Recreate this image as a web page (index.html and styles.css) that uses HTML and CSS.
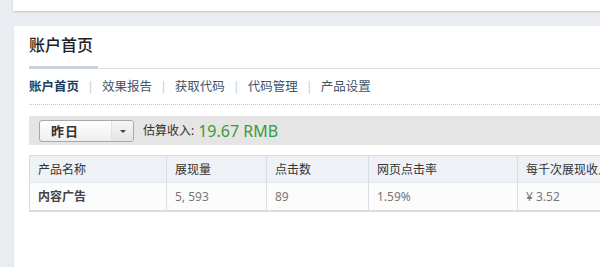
FILE: index.html
```html
<!DOCTYPE html>
<html lang="zh-CN">
<head>
    <meta charset="UTF-8">
    <title>账户首页</title>
    <link rel="stylesheet" href="styles.css">
</head>
<body>
    <div class="topbar"></div>

    <div class="panel">
        <div class="page-head">
            <h1>账户首页</h1>
        </div>

        <ul class="subnav">
            <li class="active"><a href="#">账户首页</a></li>
            <li><a href="#">效果报告</a></li>
            <li><a href="#">获取代码</a></li>
            <li><a href="#">代码管理</a></li>
            <li><a href="#">产品设置</a></li>
        </ul>

        <div class="filter-bar">
            <div class="select">
                <span class="select-text">昨日</span>
                <span class="select-arrow"></span>
            </div>
            <span class="income-label">估算收入:</span>
            <span class="income-value">19.67 RMB</span>
        </div>

        <table class="report">
            <thead>
                <tr>
                    <th class="col-name">产品名称</th>
                    <th class="col-views">展现量</th>
                    <th class="col-clicks">点击数</th>
                    <th class="col-ctr">网页点击率</th>
                    <th class="col-rpm">每千次展现收入</th>
                </tr>
            </thead>
            <tbody>
                <tr>
                    <td class="name">内容广告</td>
                    <td>5, 593</td>
                    <td>89</td>
                    <td>1.59%</td>
                    <td>¥ 3.52</td>
                </tr>
            </tbody>
        </table>
    </div>
</body>
</html>
```

FILE: styles.css
```css
:root {
    --page-bg: #e9edf1;
    --text-dark: #333333;
    --text-gray: #777777;
    --nav-blue: #1d3d5e;
    --nav-text: #3e5568;
    --line: #dcdfe3;
    --bar-bg: #e5e5e5;
    --table-border: #d7dde5;
    --table-head: #eef1f6;
    --green: #3a9a3a;
}

* {
    margin: 0;
    padding: 0;
    box-sizing: border-box;
}

body {
    background-color: var(--page-bg);
    font-family: 'Noto Sans', 'Noto Sans CJK SC', sans-serif;
    font-size: 12px;
    color: var(--text-dark);
    overflow: hidden;
    height: 267px;
}

.topbar {
    margin-left: 13px;
    height: 11px;
    background-color: #fff;
    box-shadow: 0 1px 2px rgba(0, 0, 0, 0.18);
}

.panel {
    margin-top: 15px;
    margin-left: 13px;
    width: 587px;
    height: 241px;
    background-color: #fff;
    border-left: 1px solid #e3e6ea;
    padding-left: 15px;
    overflow: hidden;
}

.page-head {
    border-bottom: 1px solid var(--line);
    height: 43px;
    padding-top: 9px;
}

.page-head h1 {
    display: inline-block;
    font-size: 16px;
    font-weight: 500;
    line-height: 20px;
    color: #222;
    padding-right: 5px;
    height: 34px;
    border-bottom: 3px solid #cbd2db;
}

.subnav {
    list-style: none;
    display: flex;
    margin-top: 10px;
    padding-bottom: 9px;
    border-bottom: 1px dotted #c4c4c4;
}

.subnav li {
    font-size: 12.5px;
    line-height: 16px;
}

.subnav li + li::before {
    content: '|';
    color: #c9ced3;
    margin: 0 8px 0 8px;
}

.subnav a {
    color: var(--nav-text);
    text-decoration: none;
}

.subnav .active a {
    color: var(--nav-blue);
    font-weight: bold;
}

.filter-bar {
    margin-top: 11px;
    height: 29px;
    background-color: var(--bar-bg);
    display: flex;
    align-items: center;
    padding-left: 10px;
}

.select {
    width: 95px;
    height: 22px;
    border: 1px solid #a8a8a8;
    border-radius: 3px;
    background: linear-gradient(#ffffff, #eeeeee);
    display: flex;
    align-items: center;
}

.select-text {
    flex: 1;
    padding-left: 11px;
    font-size: 13px;
    font-weight: bold;
    letter-spacing: 1px;
    color: #333;
    line-height: 20px;
}

.select-arrow {
    width: 22px;
    height: 20px;
    border-left: 1px solid #e2e2e2;
    background: linear-gradient(#f6f6f6, #e4e4e4);
    border-radius: 0 2px 2px 0;
    position: relative;
}

.select-arrow::after {
    content: '';
    position: absolute;
    left: 8px;
    top: 9px;
    border-left: 3px solid transparent;
    border-right: 3px solid transparent;
    border-top: 3px solid #444;
}

.income-label {
    margin-left: 9px;
    color: #333;
    line-height: 16px;
}

.income-value {
    margin-left: 4px;
    font-size: 16px;
    line-height: 20px;
    color: var(--green);
}

.report {
    margin-top: 10px;
    border-collapse: collapse;
    width: 680px;
    table-layout: fixed;
    border: 1px solid var(--table-border);
    border-bottom-width: 2px;
}

.report th,
.report td {
    text-align: left;
    font-weight: normal;
    padding: 0 8px;
    border-left: 1px solid var(--table-border);
    white-space: nowrap;
    overflow: hidden;
}

.report th {
    height: 27px;
    background-color: var(--table-head);
    color: #333;
    border-bottom: 1px solid #e1e6ec;
}

.report td {
    height: 28px;
    color: var(--text-gray);
    background-color: #fcfcfd;
}

.report td.name {
    font-weight: bold;
    color: #444;
}

.col-name { width: 137px; }
.col-views { width: 100px; }
.col-clicks { width: 102px; }
.col-ctr { width: 149px; }
.col-rpm { width: 192px; }
```
